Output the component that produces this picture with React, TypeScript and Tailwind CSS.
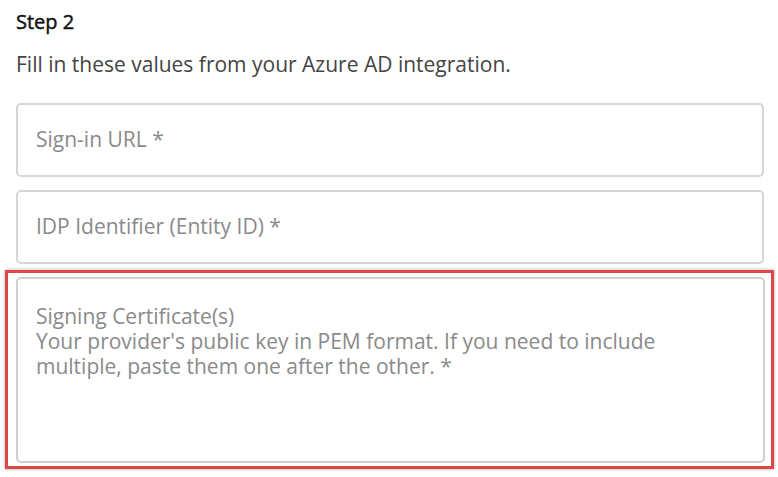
import React from "react";

const font = { fontFamily: '"Open Sans", "Noto Sans", sans-serif' };

export default function App() {
  return (
    <div className="w-[778px] h-[477px] bg-white overflow-hidden" style={font}>
      <div className="pl-4 pr-[14px] pt-[9px]">
        <h2 className="text-[20px] leading-[26px] font-normal text-[#111] [-webkit-text-stroke:0.45px_#111]">Step 2</h2>
        <p className="mt-[16px] text-[21px] leading-[26px] text-[#444]">
          Fill in these values from your Azure AD integration.
        </p>
        <div className="mt-[26px] flex flex-col gap-[13px]">
          <div className="h-[74px] rounded-[5px] border-2 border-[#d6d6d6] flex items-center pl-[18px] text-[21px] text-[#8a8a8a]">
            Sign-in URL *
          </div>
          <div className="h-[74px] rounded-[5px] border-2 border-[#d6d6d6] flex items-center pl-[18px] text-[21px] text-[#8a8a8a]">
            IDP Identifier (Entity ID) *
          </div>
        </div>
        <div className="-ml-[11px] -mr-[10px] mt-[6px] border-[3px] border-[#e04646] pl-[8px] pr-[6px] pt-[4px] pb-[3px] shadow-[0_0_3px_rgba(0,0,0,0.35)]">
          <div className="h-[186px] rounded-[5px] border-2 border-[#cfcfcf] pl-[18px] pr-4 pt-[25px] text-[21px] leading-[25px] text-[#8a8a8a]">
            <div>Signing Certificate(s)</div>
            <div>
              Your provider's public key in PEM format. If you need to include
              <br />
              multiple, paste them one after the other. *
            </div>
          </div>
        </div>
      </div>
    </div>
  );
}
